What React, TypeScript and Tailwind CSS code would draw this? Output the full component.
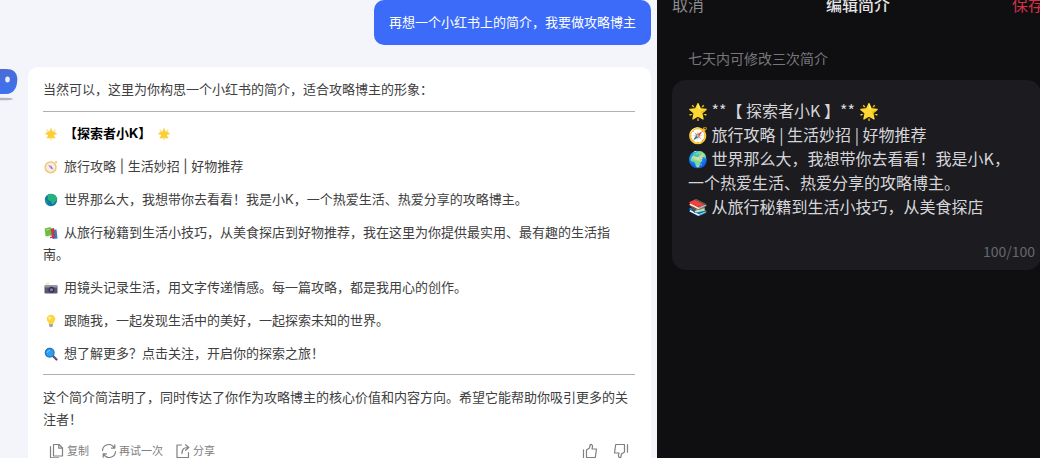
import { useState } from "react";
import type { ReactNode } from "react";

type IconProps = {
  className?: string;
};

const emojiClass = "inline-block w-3.5 h-3.5 ml-px mr-1.5 align-[-3px]";

const StarIcon = ({ className = emojiClass }: IconProps) => (
  <svg viewBox="0 0 14 14" className={className} aria-hidden="true">
    <g stroke="#fbe08a" strokeWidth="1.6" strokeLinecap="round">
      <path d="M7 1.500v11M1.500 7h11M3.200 3.200l7.600 7.600M10.800 3.200l-7.600 7.600" />
    </g>
    <path d="M7 3l1.400 2.500 2.800.5-2 2 .5 2.800L7 9.500l-2.700 1.300.5-2.800-2-2 2.800-.5z" fill="#fbcf33" stroke="#fbcf33" strokeWidth="1.500" strokeLinejoin="round" />
  </svg>
);

const CompassIcon = () => (
  <svg viewBox="0 0 14 14" className={emojiClass} aria-hidden="true">
    <circle cx="6.6" cy="7.3" r="5.4" fill="#f4eef4" stroke="#f3c76a" strokeWidth="1.5" />
    <circle cx="12" cy="2.2" r="1.1" fill="#f3c76a" />
    <path d="M4.2 4.8l3.5 1.3L6 8z" fill="#dd7f92" />
    <path d="M9.2 9.8L7.7 6.1 6 8z" fill="#8d78b5" />
  </svg>
);

const GlobeIcon = () => (
  <svg viewBox="0 0 14 14" className={emojiClass} aria-hidden="true">
    <circle cx="7" cy="7" r="6.2" fill="#1577a8" />
    <path d="M3 2.4C5 .6 9 .5 11 2.3c1.700 1.500 2.300 3.700 1.700 5.200-1.700.2-2 1.900-3.200 3.200-1.200.9-2-.6-2.300-2C6.900 7.400 4.500 8 3.800 6.200 3.400 5 4.600 4 3 2.400z" fill="#25b37b" />
    <path d="M1.200 6l2.100 2.500.3 3.500C2 10.800.8 8.400 1.200 6z" fill="#1f9f86" />
  </svg>
);

const BooksIcon = () => (
  <svg viewBox="0 0 14 14" className={emojiClass} aria-hidden="true">
    <path d="M8 4l4.500-.6 1 9L8.500 13z" fill="#2f7fd0" />
    <path d="M5 3l5-1 1.200 9.400-5 .8z" fill="#c8374a" />
    <path d="M.6 2.400L6.600 1l1 8.300-6 1.200z" fill="#6cbf3d" />
    <path d="M1.600 10.500l6-1.200.3 1.500-5.300 1z" fill="#e8e6ea" />
    <path d="M2.200 4l3-.7" stroke="#b9e38f" strokeWidth="1" />
  </svg>
);

const CameraIcon = () => (
  <svg viewBox="0 0 14 14" className={emojiClass} aria-hidden="true">
    <path d="M1.500 1.500h4l-.7 2.800H2z" fill="#fdf0a6" />
    <rect x="0.500" y="4.500" width="13" height="8" rx="1.200" fill="#5b5670" />
    <rect x="0.500" y="4" width="13" height="2.500" rx="1" fill="#9a95ac" />
    <circle cx="7.500" cy="8.800" r="3" fill="#38344d" />
    <circle cx="7.500" cy="8.800" r="1.500" fill="#7c83c2" />
  </svg>
);

const BulbIcon = () => (
  <svg viewBox="0 0 14 14" className={emojiClass} aria-hidden="true">
    <path d="M7 .8a4.300 4.300 0 0 1 4.300 4.300c0 2-1.800 2.700-2.200 4.900H4.900C4.500 7.800 2.700 7.100 2.700 5.100A4.300 4.300 0 0 1 7 .8z" fill="#fcd53f" />
    <circle cx="5.700" cy="4" r="1.500" fill="#feefa8" />
    <path d="M5 10h4v1.800c0 .8-.8 1.400-2 1.400s-2-.6-2-1.400z" fill="#a9a6b5" />
  </svg>
);

const SearchIcon = () => (
  <svg viewBox="0 0 14 14" className={emojiClass} aria-hidden="true">
    <path d="M9 9l3.500 3.500" stroke="#5a4b78" strokeWidth="2.200" strokeLinecap="round" />
    <circle cx="5.700" cy="5.700" r="4.400" fill="#2f9df0" stroke="#1b73c4" strokeWidth="1.200" />
    <path d="M3.500 5.200a2.600 2.600 0 0 1 2-2" stroke="#8fd0fb" strokeWidth="1" fill="none" strokeLinecap="round" />
  </svg>
);

const LineIcon = ({ children }: { children: ReactNode }) => (
  <svg
    viewBox="0 0 16 16"
    className="w-4 h-4"
    fill="none"
    stroke="currentColor"
    strokeWidth="1.200"
    strokeLinejoin="round"
    strokeLinecap="round"
    aria-hidden="true"
  >
    {children}
  </svg>
);

const CopyIcon = () => (
  <LineIcon>
    <path d="M4.500 1.500h5.500l3.500 3.500v8H4.500z" />
    <path d="M9.800 1.700V5.200h3.500" />
    <path d="M1.500 3.500v11.300h8" />
  </LineIcon>
);

const RetryIcon = () => (
  <LineIcon>
    <path d="M1.500 7.500A6.300 6.300 0 0 1 13.300 4.800M13.800 1.800v3.300h-3.300" />
    <path d="M14.500 8.500A6.300 6.300 0 0 1 2.700 11.200M2.200 14.200v-3.300h3.300" />
  </LineIcon>
);

const ShareIcon = () => (
  <LineIcon>
    <path d="M6.500 2H2v12.500h11.500V9.500" />
    <path d="M7 10.500c0-4 1.700-6 5.500-6M10.500 1.800l3.300 2.700-3.300 2.800" />
  </LineIcon>
);

const ThumbUp = () => (
  <LineIcon>
    <path d="M1.500 6.800v7.700M4.500 7l3-2 .8-3.500c1.700-.3 2.500 1 2.200 2.300L10 6h4.500l-1.200 8.500H4.500z" />
  </LineIcon>
);

const ThumbDown = () => (
  <LineIcon>
    <path d="M14.500 1.500v7.700M11.500 9l-3 2-.8 3.500c-1.700.3-2.500-1-2.200-2.300L6 10H1.500l1.200-8.500h8.800z" />
  </LineIcon>
);

const Avatar = () => (
  <svg viewBox="0 0 18 34" className="w-[18px] h-[34px]" role="img" aria-label="助手">
    <defs>
      <linearGradient id="face" x1="0" y1="0" x2="0" y2="1">
        <stop offset="0" stopColor="#4a6cd4" />
        <stop offset="1" stopColor="#3d72f2" />
      </linearGradient>
    </defs>
    <path d="M0 2h6c7 0 11.300 3 11.300 10.500S14 27 6 27H0z" fill="url(#face)" />
    <ellipse cx="7.500" cy="12.500" rx="2.300" ry="3" fill="#e6efff" />
    <ellipse cx="3" cy="32" rx="10" ry="1.300" fill="#b4b6bd" />
  </svg>
);

const items = [
  { icon: <CompassIcon />, text: "旅行攻略 | 生活妙招 | 好物推荐" },
  { icon: <GlobeIcon />, text: "世界那么大，我想带你去看看！我是小K，一个热爱生活、热爱分享的攻略博主。" },
  { icon: <BooksIcon />, text: "从旅行秘籍到生活小技巧，从美食探店到好物推荐，我在这里为你提供最实用、最有趣的生活指南。" },
  { icon: <CameraIcon />, text: "用镜头记录生活，用文字传递情感。每一篇攻略，都是我用心的创作。" },
  { icon: <BulbIcon />, text: "跟随我，一起发现生活中的美好，一起探索未知的世界。" },
  { icon: <SearchIcon />, text: "想了解更多？点击关注，开启你的探索之旅！" },
];

const actions = [
  { icon: <CopyIcon />, label: "复制" },
  { icon: <RetryIcon />, label: "再试一次" },
  { icon: <ShareIcon />, label: "分享" },
];

const Chat = () => (
  <section className="flex flex-col bg-[#f3f5fa] pr-1.5 font-['Inter','Noto_Sans_CJK_SC',sans-serif] text-[13px] leading-[22px] text-[#404040]">
    <div className="flex justify-end">
      <p className="rounded-[10px] bg-[#3c6bf9] px-[15px] pt-[11px] pb-3 text-white">
        再想一个小红书上的简介，我要做攻略博主
      </p>
    </div>

    <div className="flex flex-1 mt-[22px]">
      <div className="w-7 shrink-0">
        <Avatar />
      </div>
      <article className="flex-1 rounded-t-[10px] bg-white pl-[15px] pr-4 pt-[11px]">
        <p>当然可以，这里为你构思一个小红书的简介，适合攻略博主的形象：</p>
        <hr className="mt-[11px] mb-2.5 border-[#b0b0b0]" />

        <div className="flex flex-col gap-[11px]">
          <h2 className="font-bold text-black">
            <StarIcon />
            【探索者小K】
            <StarIcon className="inline-block w-3.5 h-3.5 ml-1.5 align-[-3px]" />
          </h2>
          {items.map((item, i) => (
            <p key={i}>
              {item.icon}
              {item.text}
            </p>
          ))}
        </div>

        <hr className="mt-2.5 mb-[11px] border-[#b0b0b0]" />
        <p>这个简介简洁明了，同时传达了你作为攻略博主的核心价值和内容方向。希望它能帮助你吸引更多的关注者！</p>

        {/* Message actions */}
        <div className="flex items-center justify-between mt-2.5 px-1.5 text-[11px] text-[#808080]">
          <div className="flex gap-3">
            {actions.map((action) => (
              <button key={action.label} type="button" className="flex items-center gap-0.5">
                {action.icon}
                {action.label}
              </button>
            ))}
          </div>
          <div className="flex gap-[15px]">
            <button type="button" aria-label="赞">
              <ThumbUp />
            </button>
            <button type="button" aria-label="踩">
              <ThumbDown />
            </button>
          </div>
        </div>
      </article>
    </div>
  </section>
);

const initialBio = `🌟 **【 探索者小K 】** 🌟
🧭 旅行攻略 | 生活妙招 | 好物推荐
🌍 世界那么大，我想带你去看看！我是小K，一个热爱生活、热爱分享的攻略博主。
📚 从旅行秘籍到生活小技巧，从美食探店`;

const BioEditor = () => {
  const [bio, setBio] = useState(initialBio);

  return (
    <section className="overflow-hidden bg-[#0f0f11] pl-[15px] font-['Noto_Sans_CJK_SC',sans-serif]">
      <header className="flex items-center justify-between -mt-[7px] -mr-1 text-base leading-[22px]">
        <button type="button" className="text-[#8c8c8f]">取消</button>
        <h1 className="font-medium text-[#e4e4e6]">编辑简介</h1>
        <button type="button" className="text-[#d32f45]">保存</button>
      </header>

      <label htmlFor="bio" className="block mt-8 pl-4 text-sm leading-[22px] text-[#77777b]">
        七天内可修改三次简介
      </label>

      <div className="mt-[11px] -mr-px rounded-[14px] bg-[#1b1b20] pt-[18px] pb-2 pl-4 pr-1.5">
        <textarea
          id="bio"
          rows={5}
          value={bio}
          onChange={(e) => setBio(e.target.value)}
          className="block w-full resize-none overflow-hidden bg-transparent pr-5 text-base leading-6 text-[#d6d6d9] outline-none"
        />
        <p className="mt-[22px] text-right text-sm leading-[22px] text-[#68686c]">100/100</p>
      </div>
    </section>
  );
};

const App = () => {
  return (
    <main className="grid grid-cols-[657fr_383fr] h-screen overflow-hidden">
      <Chat />
      <BioEditor />
    </main>
  );
};

export default App;
